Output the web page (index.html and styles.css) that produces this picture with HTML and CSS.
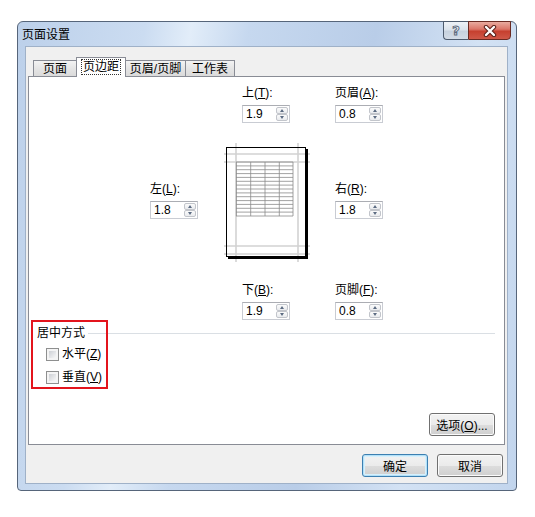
FILE: index.html
```html
<!DOCTYPE html>
<html lang="zh-CN">
<head>
<meta charset="utf-8">
<title>页面设置</title>
<link rel="stylesheet" href="styles.css">
</head>
<body>
<div class="window">
  <div class="titlebar">
    <span class="title">页面设置</span>
    <div class="caption-btns">
      <div class="cap help"><span class="help-glyph">?</span></div>
      <div class="cap close">
        <svg width="14" height="12" viewBox="0 0 14 12">
          <path d="M3 2 L11 10 M11 2 L3 10" stroke="#5a2019" stroke-width="4.4" stroke-linecap="round"/>
          <path d="M3 2 L11 10 M11 2 L3 10" stroke="#ffffff" stroke-width="2.4" stroke-linecap="round"/>
        </svg>
      </div>
    </div>
  </div>
  <div class="client">
    <div class="tabs">
      <div class="tab tab-w44">页面</div>
      <div class="tab tab-w50 active"><span class="focus">页边距</span></div>
      <div class="tab tab-w61">页眉/页脚</div>
      <div class="tab tab-w50">工作表</div>
    </div>
    <div class="page">
      <div class="margins">
        <div class="spinner cell-top">
          <div class="spin-label">上(<u>T</u>):</div>
          <div class="spin-input"><span class="value">1.9</span><span class="spin"><span class="spin-btn up"></span><span class="spin-btn down"></span></span></div>
        </div>
        <div class="spinner cell-header">
          <div class="spin-label">页眉(<u>A</u>):</div>
          <div class="spin-input"><span class="value">0.8</span><span class="spin"><span class="spin-btn up"></span><span class="spin-btn down"></span></span></div>
        </div>
        <div class="spinner cell-left">
          <div class="spin-label">左(<u>L</u>):</div>
          <div class="spin-input"><span class="value">1.8</span><span class="spin"><span class="spin-btn up"></span><span class="spin-btn down"></span></span></div>
        </div>
        <div class="preview">
          <svg width="82" height="112" viewBox="0 0 82 112">
            <rect x="0" y="0" width="80" height="110" fill="#ffffff"/>
            <g stroke="#d2d2d2" stroke-width="1.6">
              <line x1="10" y1="-4" x2="10" y2="115"/>
              <line x1="72" y1="-4" x2="72" y2="115"/>
              <line x1="-2" y1="7" x2="84" y2="7"/>
              <line x1="-2" y1="15" x2="84" y2="15"/>
              <line x1="-2" y1="99" x2="84" y2="99"/>
              <line x1="-2" y1="107" x2="84" y2="107"/>
            </g>
            <g stroke="#8a8a8a" stroke-width="0.8">
              <line x1="10" y1="15" x2="67" y2="15"/>
              <line x1="10" y1="18.9" x2="67" y2="18.9"/>
              <line x1="10" y1="22.7" x2="67" y2="22.7"/>
              <line x1="10" y1="26.6" x2="67" y2="26.6"/>
              <line x1="10" y1="30.4" x2="67" y2="30.4"/>
              <line x1="10" y1="34.3" x2="67" y2="34.3"/>
              <line x1="10" y1="38.1" x2="67" y2="38.1"/>
              <line x1="10" y1="42" x2="67" y2="42"/>
              <line x1="10" y1="45.9" x2="67" y2="45.9"/>
              <line x1="10" y1="49.7" x2="67" y2="49.7"/>
              <line x1="10" y1="53.6" x2="67" y2="53.6"/>
              <line x1="10" y1="57.4" x2="67" y2="57.4"/>
              <line x1="10" y1="61.3" x2="67" y2="61.3"/>
              <line x1="10" y1="65.1" x2="67" y2="65.1"/>
              <line x1="10" y1="69" x2="67" y2="69"/>
              <line x1="10.4" y1="15" x2="10.4" y2="69"/>
              <line x1="24.7" y1="15" x2="24.7" y2="69"/>
              <line x1="39" y1="15" x2="39" y2="69"/>
              <line x1="53.3" y1="15" x2="53.3" y2="69"/>
              <line x1="67" y1="15" x2="67" y2="69"/>
            </g>
            <rect x="0.5" y="0.5" width="79" height="109" fill="none" stroke="#000000" stroke-width="1"/>
            <rect x="80" y="2" width="2" height="110" fill="#000000"/>
            <rect x="2" y="110" width="80" height="2" fill="#000000"/>
          </svg>
        </div>
        <div class="spinner cell-right">
          <div class="spin-label">右(<u>R</u>):</div>
          <div class="spin-input"><span class="value">1.8</span><span class="spin"><span class="spin-btn up"></span><span class="spin-btn down"></span></span></div>
        </div>
        <div class="spinner cell-bottom">
          <div class="spin-label">下(<u>B</u>):</div>
          <div class="spin-input"><span class="value">1.9</span><span class="spin"><span class="spin-btn up"></span><span class="spin-btn down"></span></span></div>
        </div>
        <div class="spinner cell-footer">
          <div class="spin-label">页脚(<u>F</u>):</div>
          <div class="spin-input"><span class="value">0.8</span><span class="spin"><span class="spin-btn up"></span><span class="spin-btn down"></span></span></div>
        </div>
      </div>
      <div class="group">
        <div class="group-title"><span>居中方式</span></div>
        <label class="check-row"><span class="checkbox"></span><span>水平(<u>Z</u>)</span></label>
        <label class="check-row"><span class="checkbox"></span><span>垂直(<u>V</u>)</span></label>
        <div class="highlight"></div>
      </div>
      <div class="page-foot">
        <button class="btn">选项(<u>O</u>)...</button>
      </div>
    </div>
    <div class="dialog-foot">
      <button class="btn default">确定</button>
      <button class="btn">取消</button>
    </div>
  </div>
</div>
</body>
</html>
```

FILE: styles.css
```css
* { box-sizing: border-box; }

body {
  margin: 0;
  background: #ffffff;
  font-family: "Liberation Sans", "Noto Sans CJK SC", sans-serif;
  font-size: 12px;
  color: #000000;
}

.window {
  margin: 21px 0 0 17px;
  width: 500px;
  height: 470px;
  border: 1px solid #56657a;
  border-radius: 6px 6px 4px 4px;
  background: linear-gradient(100deg, #bcd0ea 0%, #cbdcf1 22%, #e2edf9 30%, #c6d8ef 40%, #b9cde8 62%, #d3e2f4 80%, #c2d5ed 100%);
  display: flex;
  flex-direction: column;
}

.titlebar {
  height: 24px;
  display: flex;
  justify-content: space-between;
  align-items: center;
  padding-left: 4px;
}

.title {
  font-size: 12px;
  color: #000;
  line-height: 14px;
  margin-top: 1px;
}

.caption-btns {
  align-self: flex-start;
  display: flex;
  margin: -1px 5px 0 0;
}

.cap {
  height: 19px;
  display: flex;
  align-items: center;
  justify-content: center;
  border: 1px solid #4d5b6e;
}

.help {
  width: 25px;
  border-right: none;
  border-radius: 0 0 0 4px;
  background: linear-gradient(#eef2f7 0%, #dbe3ec 45%, #c7d2df 55%, #d3dce7 100%);
}

.help-glyph {
  font-family: "DejaVu Sans", sans-serif;
  font-weight: bold;
  font-size: 13px;
  line-height: 13px;
  color: #f3f5f8;
  -webkit-text-stroke: 1px #5d6b7e;
}

.close {
  width: 43px;
  border-color: #6a2a22;
  border-radius: 0 0 4px 0;
  background: linear-gradient(#e9ab9f 0%, #db7668 42%, #c6402f 55%, #cf5848 100%);
}

.client {
  flex: 1;
  margin: 0 8px 6px 7px;
  background: #f0f0f0;
  border: 1px solid #9fb1c8;
  display: flex;
  flex-direction: column;
}

.tabs {
  display: flex;
  align-items: flex-end;
  height: 20px;
  margin: 10px 0 -1px 7px;
  position: relative;
  z-index: 1;
}

.tab {
  height: 16px;
  margin-bottom: 1px;
  border: 1px solid #898c95;
  border-bottom: none;
  background: linear-gradient(#f3f3f3, #e5e5e5 50%, #dadada);
  display: flex;
  align-items: center;
  justify-content: center;
  line-height: 14px;
  margin-left: -1px;
}

.tab:first-child { margin-left: 0; }

.tab-w44 { width: 44px; }
.tab-w50 { width: 50px; }
.tab-w61 { width: 61px; }

.tab.active {
  height: 20px;
  margin-bottom: 0;
  background: #ffffff;
  padding-bottom: 2px;
}

.focus {
  outline: 1px dotted #333;
  outline-offset: 0;
  padding: 0 1px;
}

.page {
  height: 369px;
  margin: 0 2px;
  background: #ffffff;
  border: 1px solid #898c95;
  display: flex;
  flex-direction: column;
}

.margins {
  display: grid;
  grid-template-columns: 48px 28px 82px 27px 48px;
  row-gap: 24px;
  padding: 9px 0 0 121px;
}

.cell-top { grid-column: 3; grid-row: 1; margin-left: 16px; }
.cell-header { grid-column: 5; grid-row: 1; }
.cell-left { grid-column: 1; grid-row: 2; margin-top: 35px; }
.preview { grid-column: 3; grid-row: 2; height: 112px; }
.cell-right { grid-column: 5; grid-row: 2; margin-top: 35px; }
.cell-bottom { grid-column: 3; grid-row: 3; margin-left: 16px; }
.cell-footer { grid-column: 5; grid-row: 3; }

.preview svg { display: block; overflow: visible; }

.spinner { width: 48px; }

.spin-label {
  line-height: 14px;
  height: 14px;
  margin-bottom: 5px;
  white-space: nowrap;
}

.spin-input {
  width: 48px;
  height: 18px;
  display: flex;
  border: 1px solid #c9ccd3;
  border-top-color: #abadb3;
  background: #ffffff;
}

.value {
  flex: 1;
  padding-left: 3px;
  line-height: 16px;
}

.spin {
  width: 12px;
  margin: 1px 1px 1px 0;
  display: flex;
  flex-direction: column;
}

.spin-btn {
  flex: 1;
  border: 1px solid #c2c5cb;
  border-radius: 2px;
  background: linear-gradient(#fbfbfb, #e9ebee);
  display: flex;
  align-items: center;
  justify-content: center;
}

.spin-btn::before {
  content: "";
  width: 0;
  height: 0;
  border-left: 2.5px solid transparent;
  border-right: 2.5px solid transparent;
}

.spin-btn.up::before { border-bottom: 3px solid #5c6b82; }
.spin-btn.down::before { border-top: 3px solid #5c6b82; }

.group {
  position: relative;
  margin-top: 6px;
  padding-left: 8px;
  display: flex;
  flex-direction: column;
  gap: 5px;
}

.group-title {
  display: flex;
  align-items: center;
  line-height: 14px;
  height: 14px;
  padding-right: 9px;
}

.group-title::after {
  content: "";
  flex: 1;
  height: 1px;
  margin-left: 3px;
  background: #dadfe4;
}

.check-row {
  display: flex;
  align-items: center;
  height: 18px;
  padding-left: 9px;
  line-height: 14px;
}

.checkbox {
  width: 13px;
  height: 13px;
  margin-right: 3px;
  border: 1px solid #8e8f8f;
  padding: 2px;
  background: linear-gradient(135deg, #cdd0d5, #f7f7f7) content-box, #f4f4f4;
}

.highlight {
  position: absolute;
  left: 2px;
  top: -6px;
  width: 77px;
  height: 69px;
  border: 2px solid #e3141c;
  pointer-events: none;
}

.page-foot {
  margin-top: auto;
  display: flex;
  justify-content: flex-end;
  padding: 0 9px 8px 0;
}

.btn {
  width: 66px;
  height: 23px;
  padding: 0;
  font-family: "Liberation Sans", "Noto Sans CJK SC", sans-serif;
  font-size: 12px;
  color: #000;
  border: 1px solid #707070;
  border-radius: 3px;
  background: linear-gradient(#f2f2f2 0%, #ebebeb 50%, #dddddd 51%, #cfcfcf 100%);
  box-shadow: inset 0 0 0 1px #fbfbfb;
}

.btn.default {
  border-color: #3c7fb1;
  box-shadow: inset 0 0 0 1px #b3e0f7, inset 0 0 0 2px #d7f0fc;
  background: linear-gradient(#eaf6fd 0%, #d9f0fc 50%, #bee6fd 51%, #a7d9f5 100%);
  background: linear-gradient(#f2f2f2 0%, #ebebeb 50%, #dddddd 51%, #cfcfcf 100%);
}

.dialog-foot {
  display: flex;
  justify-content: flex-end;
  gap: 9px;
  margin-top: 9px;
  padding-right: 4px;
}
```
